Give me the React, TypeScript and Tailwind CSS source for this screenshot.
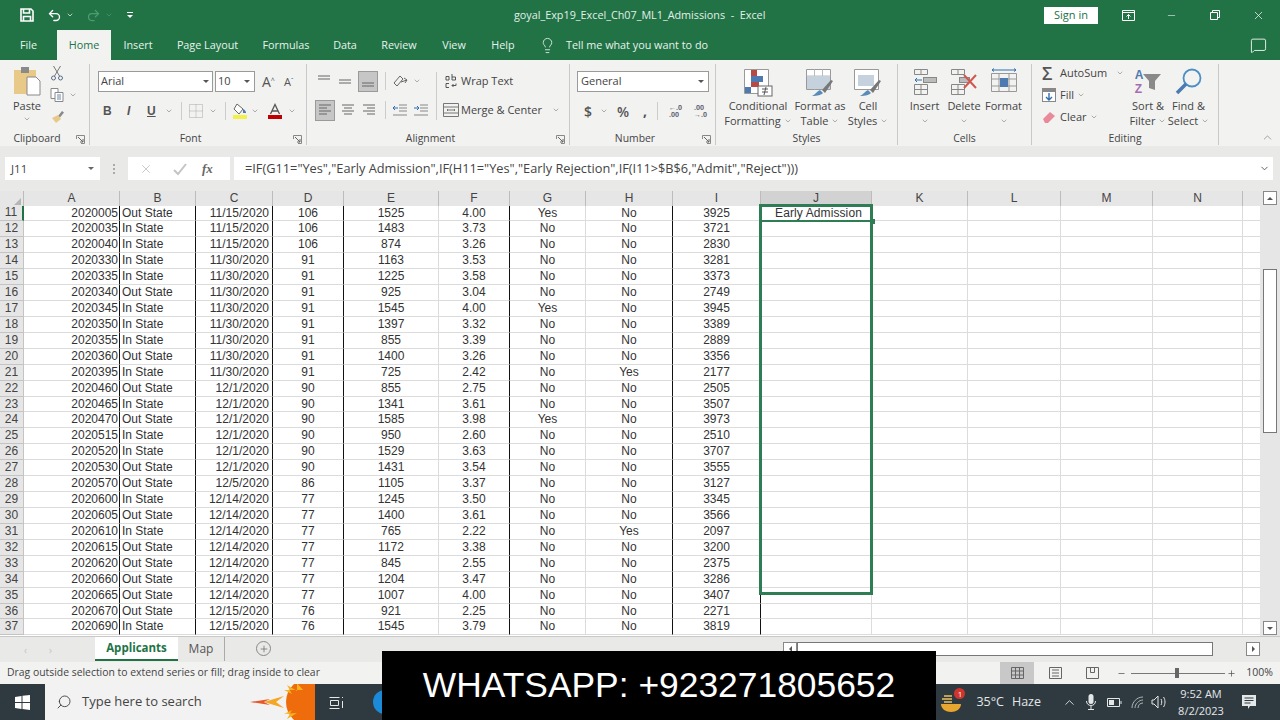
import type { ReactNode } from "react";
import { ChevronDown, ChevronUp, Lightbulb, MessageSquare, Minus, Plus, Search, Undo2, Redo2, X } from "lucide-react";

const UI_FONT = "font-['Open_Sans','Noto_Sans',sans-serif]";
const CELL_FONT = "font-['Liberation_Sans',Arial,sans-serif]";

const COLUMNS = [
  { name: "A", w: 96, align: "text-right pr-[1px]", black: true },
  { name: "B", w: 76, align: "text-left pl-[2px]", black: true },
  { name: "C", w: 77, align: "text-right pr-[3px]", black: true },
  { name: "D", w: 71, align: "text-center", black: true },
  { name: "E", w: 95, align: "text-center", black: false },
  { name: "F", w: 71, align: "text-center", black: true },
  { name: "G", w: 76, align: "text-center", black: false },
  { name: "H", w: 87, align: "text-center", black: true },
  { name: "I", w: 88, align: "text-center", black: true },
  { name: "J", w: 111, align: "text-center pl-[5px] tracking-[0.1px]", black: false },
  { name: "K", w: 96, align: "", black: false },
  { name: "L", w: 93, align: "", black: false },
  { name: "M", w: 92, align: "", black: false },
  { name: "N", w: 90, align: "", black: false },
];

const ROWS: string[][] = [
  ["2020005", "Out State", "11/15/2020", "106", "1525", "4.00", "Yes", "No", "3925", "Early Admission"],
  ["2020035", "In State", "11/15/2020", "106", "1483", "3.73", "No", "No", "3721"],
  ["2020040", "In State", "11/15/2020", "106", "874", "3.26", "No", "No", "2830"],
  ["2020330", "In State", "11/30/2020", "91", "1163", "3.53", "No", "No", "3281"],
  ["2020335", "In State", "11/30/2020", "91", "1225", "3.58", "No", "No", "3373"],
  ["2020340", "Out State", "11/30/2020", "91", "925", "3.04", "No", "No", "2749"],
  ["2020345", "In State", "11/30/2020", "91", "1545", "4.00", "Yes", "No", "3945"],
  ["2020350", "In State", "11/30/2020", "91", "1397", "3.32", "No", "No", "3389"],
  ["2020355", "In State", "11/30/2020", "91", "855", "3.39", "No", "No", "2889"],
  ["2020360", "Out State", "11/30/2020", "91", "1400", "3.26", "No", "No", "3356"],
  ["2020395", "In State", "11/30/2020", "91", "725", "2.42", "No", "Yes", "2177"],
  ["2020460", "Out State", "12/1/2020", "90", "855", "2.75", "No", "No", "2505"],
  ["2020465", "In State", "12/1/2020", "90", "1341", "3.61", "No", "No", "3507"],
  ["2020470", "Out State", "12/1/2020", "90", "1585", "3.98", "Yes", "No", "3973"],
  ["2020515", "In State", "12/1/2020", "90", "950", "2.60", "No", "No", "2510"],
  ["2020520", "In State", "12/1/2020", "90", "1529", "3.63", "No", "No", "3707"],
  ["2020530", "Out State", "12/1/2020", "90", "1431", "3.54", "No", "No", "3555"],
  ["2020570", "Out State", "12/5/2020", "86", "1105", "3.37", "No", "No", "3127"],
  ["2020600", "In State", "12/14/2020", "77", "1245", "3.50", "No", "No", "3345"],
  ["2020605", "Out State", "12/14/2020", "77", "1400", "3.61", "No", "No", "3566"],
  ["2020610", "In State", "12/14/2020", "77", "765", "2.22", "No", "Yes", "2097"],
  ["2020615", "Out State", "12/14/2020", "77", "1172", "3.38", "No", "No", "3200"],
  ["2020620", "Out State", "12/14/2020", "77", "845", "2.55", "No", "No", "2375"],
  ["2020660", "Out State", "12/14/2020", "77", "1204", "3.47", "No", "No", "3286"],
  ["2020665", "Out State", "12/14/2020", "77", "1007", "4.00", "No", "No", "3407"],
  ["2020670", "Out State", "12/15/2020", "76", "921", "2.25", "No", "No", "2271"],
  ["2020690", "In State", "12/15/2020", "76", "1545", "3.79", "No", "No", "3819"],
];

const TABS = [
  { label: "File", w: "w-[57px]" },
  { label: "Home", w: "w-[54px]", active: true },
  { label: "Insert", w: "w-[54px]" },
  { label: "Page Layout", w: "w-[85px]" },
  { label: "Formulas", w: "w-[72px]" },
  { label: "Data", w: "w-[46px]" },
  { label: "Review", w: "w-[62px]" },
  { label: "View", w: "w-[48px]" },
  { label: "Help", w: "w-[50px]" },
];

function Caret({ className = "" }: { className?: string }) {
  return <ChevronDown strokeWidth={1.5} className={`h-[8px] w-[8px] shrink-0 text-[#666] ${className}`} />;
}

function Launcher() {
  return (
    <svg width="9" height="9" viewBox="0 0 9 9" className="shrink-0">
      <path d="M.5 4V.5H8.500V8.500H5" fill="none" stroke="#888" />
      <path d="M2 2l5 5M7 4v3H4" fill="none" stroke="#666" />
    </svg>
  );
}

function Group({ w, label, launcher, children }: { w: string; label: string; launcher?: boolean; children: ReactNode }) {
  return (
    <div className={`${w} relative flex h-[81px] shrink-0 flex-col border-r border-[#c9c9c9]`}>
      <div className="flex h-[67px] shrink-0">{children}</div>
      <div
        className={`flex h-[14px] items-center justify-center text-[10.400px] leading-none text-[#444] ${
          launcher ? "pr-[15px]" : ""
        }`}
      >
        {label}
      </div>
      {launcher && (
        <div className="absolute bottom-[1px] right-[4px]">
          <Launcher />
        </div>
      )}
    </div>
  );
}

function AlignLines({ kind }: { kind: "top" | "mid" | "bot" | "left" | "center" | "right" }) {
  const paths = {
    top: "M2 3h12M2 6h12",
    mid: "M2 7h12M2 10h12",
    bot: "M2 10h12M2 13h12",
    left: "M2 3h12M2 6h8M2 9h12M2 12h8",
    center: "M2 3h12M4 6h8M2 9h12M4 12h8",
    right: "M2 3h12M6 6h8M2 9h12M6 12h8",
  };
  return (
    <svg width="16" height="16" viewBox="0 0 16 16">
      <path d={paths[kind]} stroke="#666" fill="none" />
    </svg>
  );
}

function BigButton({ w, lines, icon, caretOwnLine }: { w: string; lines: string[]; icon: ReactNode; caretOwnLine?: boolean }) {
  return (
    <div className={`${w} flex shrink-0 flex-col items-center pt-[4px] text-[11px] leading-[15px] text-[#444]`}>
      <div className="flex h-[29px] items-start justify-center">{icon}</div>
      <div className="mt-[1px] whitespace-nowrap">{lines[0]}</div>
      {caretOwnLine ? (
        <div className="flex h-[15px] items-center">
          <Caret />
        </div>
      ) : (
        <div className="flex items-center gap-[3px] whitespace-nowrap">
          {lines[1]}
          <Caret />
        </div>
      )}
    </div>
  );
}

function TitleBar() {
  return (
    <div className="flex h-[30px] items-center text-white">
      <div className="flex w-[514px] shrink-0 items-center pl-[20px]">
        <svg width="14" height="14" viewBox="0 0 14 14" fill="none" stroke="#fff" strokeWidth="1.600">
          <path d="M1 1h10l2 2v10H1zM3.500 1v4h6V1M3.500 13V8.500h7V13" />
        </svg>
        <Undo2 className="ml-[13px] h-[15px] w-[15px]" strokeWidth={2.2} />
        <ChevronDown className="ml-[4px] h-[8px] w-[8px]" />
        <Redo2 className="ml-[12px] h-[15px] w-[15px] text-[#4f9a72]" strokeWidth={2} />
        <ChevronDown className="ml-[4px] h-[8px] w-[8px] text-[#4f9a72]" />
        <div className="ml-[14px] flex flex-col items-center gap-[2px]">
          <div className="h-[1px] w-[6px] bg-white" />
          <div className="h-0 w-0 border-x-[3px] border-t-[3px] border-x-transparent border-t-white" />
        </div>
      </div>
      <div className="w-[251px] shrink-0 whitespace-nowrap text-center text-[10.800px] text-[#e3efe8]">
        goyal_Exp19_Excel_Ch07_ML1_Admissions&nbsp; -&nbsp; Excel
      </div>
      <div className="flex flex-1 items-center">
        <div className="ml-[279px] flex h-[17px] w-[54px] items-center justify-center bg-white text-[11px] text-[#217346]">
          Sign in
        </div>
        <svg width="13" height="11" viewBox="0 0 13 11" className="ml-[24px]" fill="none" stroke="#fff">
          <path d="M.5.5h12v10H.5zM.5 2.500h12M6.500 9V4.500M4.500 6.500l2-2 2 2" />
        </svg>
        <Minus className="ml-[31px] h-[11px] w-[11px]" strokeWidth={1.2} />
        <svg width="10" height="10" viewBox="0 0 10 10" className="ml-[33px]" fill="none" stroke="#fff">
          <path d="M.5 2.500h7v7h-7zM2.500 2.500v-2h7v7h-2" />
        </svg>
        <X className="ml-[32px] h-[13px] w-[13px]" strokeWidth={1.3} />
      </div>
    </div>
  );
}

function TabsRow() {
  return (
    <div className="flex h-[30px] items-stretch text-[10.800px]">
      {TABS.map((t) => (
        <div
          key={t.label}
          className={`${t.w} flex shrink-0 items-center justify-center ${
            t.active ? "bg-[#f2f2f1] text-[#217346]" : "text-[#e8f2ec]"
          }`}
        >
          {t.label}
        </div>
      ))}
      <Lightbulb className="ml-[11px] mt-[7px] h-[17px] w-[17px] text-[#e8f2ec]" strokeWidth={1.2} />
      <div className="ml-[10px] flex items-center text-[#e8f2ec]">Tell me what you want to do</div>
      <MessageSquare className="ml-auto mr-[13px] mt-[7px] h-[17px] w-[17px] text-white" strokeWidth={1.2} />
    </div>
  );
}

function Ribbon() {
  return (
    <div className="relative flex h-[86px] items-start bg-[#f2f2f1] pt-[4px] text-[#444]">
      <Group w="w-[90px]" label="Clipboard" launcher>
        <div className="-mr-[5px] flex w-[54px] flex-col items-center pt-[3px] text-[11px]">
          <svg width="28" height="30" viewBox="0 0 28 30">
            <rect x="1" y="3" width="22" height="24" fill="#e8c987" />
            <rect x="8" y="0" width="8" height="6" fill="#8a8a8a" />
            <path d="M14 10h9l4 4v14H14z" fill="#fff" stroke="#888" />
          </svg>
          <div className="mt-[2px] leading-[14px]">Paste</div>
          <Caret className="mt-[2px]" />
        </div>
        <div className="flex flex-col items-start gap-[6px] pt-[1px]">
          <svg width="16" height="16" viewBox="0 0 16 16" fill="none" stroke="#5a6e86">
            <circle cx="4.500" cy="13" r="2" />
            <circle cx="11.500" cy="13" r="2" />
            <path d="M5.500 11L11.500 1M10.500 11L4.500 1" stroke="#777" />
          </svg>
          <div className="flex items-center gap-[4px]">
            <svg width="16" height="16" viewBox="0 0 16 16" fill="#fff" stroke="#888">
              <path d="M2 1.500h7v10H2z" />
              <path d="M6 5.500h8v9H6z" />
              <path d="M8 8h4M8 10h4M8 12h4" stroke="#6a86a8" />
            </svg>
            <Caret />
          </div>
          <svg width="16" height="16" viewBox="0 0 16 16">
            <path d="M9 7l4-5 2 1.500-4 5z" fill="#8a8a8a" />
            <path d="M3 9l6-3 3 4-5 4z" fill="#e8c987" />
          </svg>
        </div>
      </Group>

      <Group w="w-[217px]" label="Font" launcher>
        <div className="flex w-full flex-col pl-[8px] pt-[7px]">
          <div className="flex items-center">
            <div className="flex h-[21px] w-[115px] items-center justify-between border border-[#9a9a9a] bg-white pl-[2px] pr-[3px] text-[11px]">
              Arial
              <div className="h-0 w-0 border-x-[3px] border-t-[3px] border-x-transparent border-t-[#555]" />
            </div>
            <div className="ml-[2px] flex h-[21px] w-[40px] items-center justify-between border border-[#9a9a9a] bg-white pl-[2px] pr-[4px] text-[11px]">
              10
              <div className="h-0 w-0 border-x-[3px] border-t-[3px] border-x-transparent border-t-[#555]" />
            </div>
            <span className="ml-[7px] text-[14px] leading-none text-[#555]">
              A<sup className="text-[7px]">^</sup>
            </span>
            <span className="ml-[9px] text-[11px] leading-none text-[#555]">
              A<sup className="text-[7px]">ˇ</sup>
            </span>
          </div>
          <div className="mt-[8px] flex h-[22px] items-center">
            <span className={`${CELL_FONT} ml-[5px] w-[24px] text-[12px] font-bold text-[#555]`}>B</span>
            <span className={`${CELL_FONT} w-[20px] text-[12px] font-bold italic text-[#555]`}>I</span>
            <span className={`${CELL_FONT} w-[14px] text-[12px] font-bold text-[#555] underline`}>U</span>
            <Caret className="ml-[4px]" />
            <div className="ml-[8px] mr-[7px] h-[18px] w-px bg-[#ccc]" />
            <svg width="14" height="14" viewBox="0 0 14 14" fill="none" stroke="#aaa" strokeDasharray="1 1">
              <path d="M.5.5h13v13H.5zM7 .5v13M.5 7h13" />
            </svg>
            <Caret className="ml-[6px]" />
            <div className="ml-[8px] mr-[6px] h-[18px] w-px bg-[#ccc]" />
            <svg width="17" height="18" viewBox="0 0 17 18">
              <path d="M5 2l6 5-4 5-5-5z" fill="#fff" stroke="#666" />
              <path d="M11 7c2 1 3 2 3 4H11z" fill="#4d7ab0" />
              <rect x="1" y="13" width="14" height="4" fill="#f4f04a" />
            </svg>
            <Caret className="ml-[2px]" />
            <svg width="16" height="16" viewBox="0 0 16 16" className="ml-[8px]">
              <path d="M3.500 11L8 1.500 12.500 11M5 8h6" fill="none" stroke="#555" strokeWidth="1.300" />
              <rect x="1" y="12" width="14" height="4" fill="#c00000" />
            </svg>
            <Caret className="ml-[5px]" />
          </div>
        </div>
      </Group>

      <Group w="w-[263px]" label="Alignment" launcher>
        <div className="flex w-full pl-[8px] pt-[6px]">
          <div className="flex flex-col">
            <div className="flex h-[22px] items-center gap-[5px] pl-[1px]">
              <AlignLines kind="top" />
              <AlignLines kind="mid" />
              <div className="flex h-[21px] w-[20px] items-center justify-center border border-[#9a9a9a] bg-[#c6c6c6]">
                <AlignLines kind="bot" />
              </div>
              <div className="ml-[2px] h-[18px] w-px bg-[#ccc]" />
              <svg width="18" height="16" viewBox="0 0 18 16" className="ml-[1px]" fill="none" stroke="#666">
                <path d="M2 10l6-7 3 3-6 7zM9 9l6-2M12 5l3 2-2 3" />
              </svg>
              <Caret className="-ml-[2px]" />
            </div>
            <div className="mt-[7px] flex h-[22px] items-center gap-[5px]">
              <div className="flex h-[21px] w-[20px] items-center justify-center border border-[#9a9a9a] bg-[#c6c6c6]">
                <AlignLines kind="left" />
              </div>
              <AlignLines kind="center" />
              <AlignLines kind="right" />
              <div className="ml-[3px] h-[18px] w-px bg-[#ccc]" />
              <svg width="16" height="14" viewBox="0 0 16 14" className="ml-[1px]" fill="none" stroke="#888">
                <path d="M7 2h8M7 5h8M7 8h8M1 12h14" />
                <path d="M6 5H1M3 3L1 5l2 2" stroke="#2f6fb0" />
              </svg>
              <svg width="16" height="14" viewBox="0 0 16 14" fill="none" stroke="#888">
                <path d="M7 2h8M7 5h8M7 8h8M1 12h14" />
                <path d="M1 5h5M4 3l2 2-2 2" stroke="#2f6fb0" />
              </svg>
            </div>
          </div>
          <div className="ml-[7px] mr-[6px] mt-[2px] h-[48px] w-px bg-[#ccc]" />
          <div className="flex flex-col text-[11px]">
            <div className="flex h-[22px] items-center gap-[3px] pl-[1px]">
              <svg width="14" height="16" viewBox="0 0 14 16" fill="none" stroke="#555">
                <path d="M2 7V3.500h3V7H2zM8 1v6h3.500V4H8M5 10.500H2v4h3M8 12.500h4v-2M9.500 11l-1.500 1.500L9.500 14" />
              </svg>
              <span>Wrap Text</span>
            </div>
            <div className="mt-[7px] flex h-[22px] items-center gap-[2px]">
              <svg width="16" height="14" viewBox="0 0 16 14" fill="none" stroke="#777">
                <path d="M.5.5h15v13H.5zM.5 4h15M.5 10h15M5 7h6M5 6L4 7l1 1M11 6l1 1-1 1" />
              </svg>
              <span className="whitespace-nowrap">Merge &amp; Center</span>
              <Caret className="ml-[8px]" />
            </div>
          </div>
        </div>
      </Group>

      <Group w="w-[146px]" label="Number" launcher>
        <div className="flex w-full flex-col pl-[7px] pt-[7px]">
          <div className="flex h-[21px] w-[132px] items-center justify-between border border-[#9a9a9a] bg-white pl-[3px] pr-[4px] text-[11px]">
            General
            <div className="h-0 w-0 border-x-[3px] border-t-[3px] border-x-transparent border-t-[#555]" />
          </div>
          <div className="mt-[8px] flex h-[22px] items-center text-[#555]">
            <span className="ml-[7px] w-[13px] text-[14px] font-semibold">$</span>
            <Caret className="ml-[3px]" />
            <span className="ml-[9px] w-[16px] text-[14px] font-semibold">%</span>
            <span className="ml-[10px] w-[8px] text-[14px] font-bold leading-none">,</span>
            <div className="ml-[6px] mr-[11px] h-[18px] w-px bg-[#ccc]" />
            <span className="w-[16px] text-[7px] font-bold leading-[7px] text-[#667]">
              ←.0
              <br />
              .00
            </span>
            <span className="ml-[9px] w-[16px] text-[7px] font-bold leading-[7px] text-[#667]">
              .00
              <br />
              →.0
            </span>
          </div>
        </div>
      </Group>

      <Group w="w-[182px]" label="Styles">
        <BigButton
          w="w-[84px]"
          lines={["Conditional", "Formatting"]}
          icon={
            <svg width="30" height="29" viewBox="0 0 30 29">
              <path d="M1.500 1.500h24v24h-24z" fill="#fff" stroke="#999" />
              <rect x="8" y="2" width="6" height="6" fill="#b64a45" />
              <rect x="8" y="8" width="12" height="6" fill="#4d7ab0" />
              <rect x="8" y="14" width="8" height="5" fill="#b64a45" />
              <rect x="2" y="19" width="6" height="6" fill="#4d7ab0" />
              <rect x="15" y="18" width="14" height="10" fill="#fff" stroke="#666" />
              <path d="M19 21h6M19 24h6M23 19l-2 8" stroke="#555" fill="none" />
            </svg>
          }
        />
        <BigButton
          w="w-[40px]"
          lines={["Format as", "Table"]}
          icon={
            <svg width="30" height="29" viewBox="0 0 30 29">
              <path d="M1.500 1.500h24v20h-24z" fill="#fff" stroke="#999" />
              <path d="M9.500 1.500v20M17.500 1.500v20M1.500 8h24" stroke="#bbb" fill="none" />
              <rect x="2" y="8" width="23" height="13" fill="#c5d2de" />
              <path d="M7 28c3-1 5-5 8-6l3 3c-2 2-5 3-11 3z" fill="#5a8bb8" />
              <path d="M17 22l9-10 2 1-8 12z" fill="#777" />
            </svg>
          }
        />
        <BigButton
          w="w-[56px]"
          lines={["Cell", "Styles"]}
          icon={
            <svg width="30" height="29" viewBox="0 0 30 29">
              <path d="M1.500 1.500h24v20h-24z" fill="#fff" stroke="#999" />
              <rect x="5" y="7" width="16" height="11" fill="#c5d2de" />
              <path d="M7 28c3-1 5-5 8-6l3 3c-2 2-5 3-11 3z" fill="#5a8bb8" />
              <path d="M17 22l9-10 2 1-8 12z" fill="#777" />
            </svg>
          }
        />
      </Group>

      <Group w="w-[134px]" label="Cells">
        <div className="flex w-full pl-[7px]">
          <BigButton
            w="w-[39px]"
            caretOwnLine
            lines={["Insert"]}
            icon={
              <svg width="26" height="28" viewBox="0 0 26 28" fill="none" stroke="#888">
                <path d="M2.500 1.500h13v5h-13zM9 1.500v5M2.500 16.500h13v10h-13zM9 16.500v10M2.500 21.500h13" />
                <rect x="11.500" y="9.500" width="13" height="5" fill="#bbb" />
                <path d="M10 12H3M5 10l-2 2 2 2" stroke="#2f6fb0" />
              </svg>
            }
          />
          <BigButton
            w="w-[40px]"
            caretOwnLine
            lines={["Delete"]}
            icon={
              <svg width="28" height="28" viewBox="0 0 28 28" fill="none" stroke="#888">
                <path d="M1.500 1.500h13v5h-13zM8 1.500v5M1.500 16.500h13v10h-13zM8 16.500v10M1.500 21.500h13" />
                <rect x="9.500" y="9.500" width="10" height="5" fill="#bbb" />
                <path d="M14 7l12 13M26 7L14 20" stroke="#d0584f" strokeWidth="2" />
              </svg>
            }
          />
          <BigButton
            w="w-[39px]"
            caretOwnLine
            lines={["Format"]}
            icon={
              <svg width="28" height="29" viewBox="0 0 28 29" fill="none" stroke="#999">
                <path d="M1.500 5.500h25v18h-25zM9 5.500v18M19 5.500v18M1.500 11h25M1.500 18h25" />
                <rect x="10" y="10" width="8" height="9" fill="#4d7ab0" stroke="none" />
                <path d="M2 2h24M4 .5l-2 1.500 2 1.500M24 .5l2 1.500-2 1.500" stroke="#2f6fb0" />
              </svg>
            }
          />
        </div>
      </Group>

      <Group w="w-[187px]" label="Editing">
        <div className="flex w-full pl-[10px]">
          <div className="-mt-[2px] flex w-[86px] flex-col text-[11px] leading-[22px]">
            <div className="flex h-[22px] items-center">
              <span className="w-[18px] text-[18px] font-semibold leading-none text-[#555]">Σ</span>
              <span>AutoSum</span>
              <Caret className="ml-[9px]" />
            </div>
            <div className="flex h-[22px] items-center">
              <svg width="14" height="14" viewBox="0 0 14 14" className="mr-[4px]">
                <rect x=".5" y=".5" width="13" height="13" fill="#fff" stroke="#888" />
                <rect x="1" y="1" width="12" height="3" fill="#888" />
                <path d="M7 5v7M4 9l3 3 3-3" stroke="#2f6fb0" fill="none" strokeWidth="1.400" />
              </svg>
              <span>Fill</span>
              <Caret className="ml-[3px]" />
            </div>
            <div className="flex h-[22px] items-center">
              <svg width="14" height="14" viewBox="0 0 14 14" className="mr-[4px]">
                <path d="M1 9l7-7 5 4-7 7H3z" fill="#e88a9a" />
              </svg>
              <span>Clear</span>
              <Caret className="ml-[3px]" />
            </div>
          </div>
          <BigButton
            w="w-[40px]"
            lines={["Sort &", "Filter"]}
            icon={
              <span className="flex">
                <span className={`${CELL_FONT} flex flex-col text-[12px] font-bold leading-[14px]`}>
                  <span className="text-[#4d7ab0]">A</span>
                  <span className="text-[#a56cb0]">Z</span>
                </span>
                <svg width="18" height="18" viewBox="0 0 18 18" className="mt-[5px]">
                  <path d="M0 1h18l-6 7v9l-6-2V8z" fill="#8a8a8a" />
                </svg>
              </span>
            }
          />
          <BigButton
            w="w-[41px]"
            lines={["Find &", "Select"]}
            icon={
              <svg width="28" height="28" viewBox="0 0 28 28" fill="none">
                <circle cx="17" cy="10" r="8.500" stroke="#4d8fc4" strokeWidth="1.800" />
                <path d="M11 16L2 25" stroke="#4d7ab0" strokeWidth="3.500" />
              </svg>
            }
          />
        </div>
      </Group>

      <ChevronUp className="absolute bottom-[2px] right-[6px] h-[13px] w-[13px] text-[#777]" strokeWidth={1.2} />
    </div>
  );
}

function FormulaBar() {
  return (
    <div className="flex h-[45px] items-start bg-[#e9e9e8] pt-[11px]">
      <div className="ml-[5px] flex h-[23px] w-[95px] items-center justify-between bg-white pl-[6px] pr-[6px] text-[11.500px] text-[#444]">
        J11
        <div className="h-0 w-0 border-x-[3.500px] border-t-[3.500px] border-x-transparent border-t-[#666]" />
      </div>
      <div className="ml-[13px] mt-[7px] flex flex-col gap-[2px]">
        <div className="h-[2px] w-[2px] bg-[#aaa]" />
        <div className="h-[2px] w-[2px] bg-[#aaa]" />
        <div className="h-[2px] w-[2px] bg-[#aaa]" />
      </div>
      <div className="ml-[13px] flex h-[23px] w-[102px] items-center bg-white pl-[11px] text-[#c4c4c4]">
        <X className="h-[14px] w-[14px]" strokeWidth={1.5} />
        <svg width="14" height="14" viewBox="0 0 14 14" className="ml-[20px]" fill="none" stroke="#c4c4c4" strokeWidth="2">
          <path d="M1 8l4 4 8-10" />
        </svg>
        <span className="ml-[15px] font-['Liberation_Serif',serif] text-[13px] font-bold italic text-[#666]">fx</span>
      </div>
      <div className="ml-[4px] flex h-[23px] w-[1039px] items-center justify-between bg-white pl-[11px] pr-[3px] text-[12.770px] text-[#444]">
        <span>=IF(G11="Yes","Early Admission",IF(H11="Yes","Early Rejection",IF(I11&gt;$B$6,"Admit","Reject")))</span>
        <ChevronDown className="h-[11px] w-[11px] text-[#555]" strokeWidth={2} />
      </div>
    </div>
  );
}

function Sheet() {
  return (
    <div className={`${CELL_FONT} relative flex h-[445px] bg-white text-[12px] text-[#333]`}>
      <div className="flex w-[1260px] shrink-0 flex-col overflow-hidden">
        <div className="flex h-[14.500px] shrink-0 bg-[#e6e6e6] text-[#444]">
          <div className="flex w-[24px] shrink-0 items-end justify-end border-r border-[#bbb] pb-[1px] pr-[2px]">
            <div className="h-0 w-0 border-b-[7px] border-l-[7px] border-b-[#b5b5b5] border-l-transparent" />
          </div>
          {COLUMNS.map((c) => (
            <div
              key={c.name}
              style={{ width: c.w }}
              className={`flex shrink-0 items-center justify-center border-r border-[#bcbcbc] leading-none ${
                c.name === "J" ? "bg-[#d2d2d2]" : ""
              }`}
            >
              {c.name}
            </div>
          ))}
        </div>
        {ROWS.map((row, i) => (
          <div key={i} className="flex h-[15.930px] shrink-0 leading-[15px]">
            <div
              className={`flex w-[24px] shrink-0 items-center justify-center border-b border-r border-[#c4c4c4] bg-[#e6e6e6] text-[#444] ${
                i === 0 ? "border-r-2 border-r-[#217346] bg-[#d2d2d2]" : ""
              }`}
            >
              {i + 11}
            </div>
            {COLUMNS.map((c, j) => (
              <div
                key={c.name}
                style={{ width: c.w }}
                className={`shrink-0 overflow-visible whitespace-nowrap border-b border-r border-b-[#dcdcdc] ${
                  c.black ? "border-r-[#111]" : "border-r-[#dcdcdc]"
                } ${c.align}`}
              >
                {row[j] ?? ""}
              </div>
            ))}
            <div className="flex-1 border-b border-[#dcdcdc]" />
          </div>
        ))}
      </div>
      {/* fill selection over column J */}
      <div className="absolute left-[759px] top-[13px] h-[391px] w-[114px] border-[3px] border-[#2f7d55]">
        <div className="mt-[13px] h-[2px] w-full bg-[#2f7d55]" />
        <div className="absolute right-[-5px] top-[12px] h-[5px] w-[5px] bg-[#2f7d55]" />
      </div>
      <div className="flex flex-1 flex-col items-center bg-[#e6e6e6]">
        <div className="flex h-[14px] w-[14px] items-center justify-center border border-[#888] bg-white">
          <div className="h-0 w-0 border-x-[3px] border-b-[3px] border-x-transparent border-b-[#555]" />
        </div>
        <div className="mt-[64px] h-[164px] w-[14px] border border-[#777] bg-white" />
        <div className="mt-auto mb-[1px] flex h-[14px] w-[14px] items-center justify-center border border-[#888] bg-white">
          <div className="h-0 w-0 border-x-[3px] border-t-[3px] border-x-transparent border-t-[#555]" />
        </div>
      </div>
    </div>
  );
}

function SheetTabs() {
  return (
    <div className="flex h-[26px] items-start border-t border-[#c8c8c8] bg-[#e9e9e8] text-[12px]">
      <div className="ml-[24px] mt-[6px] flex w-[71px] gap-[22px] text-[#c5c5c5]">
        <span className="text-[10px]">‹</span>
        <span className="text-[10px]">›</span>
      </div>
      <div className="flex h-[24px] w-[83px] items-center justify-center border-b-2 border-[#217346] bg-white text-[11.500px] font-bold text-[#217346]">
        Applicants
      </div>
      <div className="flex h-[24px] w-[47px] items-center justify-center border-r border-[#aaa] text-[#555]">Map</div>
      <div className="ml-[31px] mt-[4px] flex h-[15px] w-[15px] items-center justify-center rounded-full border border-[#888]">
        <Plus className="h-[10px] w-[10px] text-[#777]" strokeWidth={2} />
      </div>
      <div className="ml-[512px] mt-[5px] flex h-[14px] w-[477px] items-stretch">
        <div className="flex w-[14px] items-center justify-center border border-[#888] bg-white">
          <div className="h-0 w-0 border-y-[3px] border-r-[3px] border-y-transparent border-r-[#555]" />
        </div>
        <div className="w-[416px] border border-[#777] bg-white" />
        <div className="flex-1" />
        <div className="flex w-[14px] items-center justify-center border border-[#888] bg-white">
          <div className="h-0 w-0 border-y-[3px] border-l-[3px] border-y-transparent border-l-[#555]" />
        </div>
      </div>
    </div>
  );
}

function StatusBar() {
  return (
    <div className="flex h-[22px] items-center bg-[#f2f2f1] text-[10.400px] text-[#444]">
      <span className="ml-[7px]">Drag outside selection to extend series or fill; drag inside to clear</span>
      <div className="ml-auto flex h-full items-center pr-[7px]">
        <div className="flex h-full w-[34px] items-center justify-center bg-[#c8c8c8]">
          <svg width="13" height="12" viewBox="0 0 13 12" fill="none" stroke="#666">
            <path d="M.5.5h12v11H.5zM4.500.5v11M8.500.5v11M.5 4h12M.5 8h12" />
          </svg>
        </div>
        <svg width="13" height="12" viewBox="0 0 13 12" className="ml-[15px]" fill="none" stroke="#666">
          <path d="M.5.5h12v11H.5zM3 3h7M3 6h7M3 9h7" />
        </svg>
        <svg width="13" height="12" viewBox="0 0 13 12" className="ml-[24px]" fill="none" stroke="#666">
          <path d="M.5.5h12v11H.5zM4.500.5v5h4v-5" />
        </svg>
        <Minus className="ml-[18px] h-[9px] w-[9px] text-[#555]" />
        <div className="relative ml-[5px] flex h-[9px] w-[94px] items-center">
          <div className="h-px w-full bg-[#777]" />
          <div className="absolute left-[44px] h-[10px] w-[4px] bg-[#666]" />
        </div>
        <Plus className="ml-[2px] h-[9px] w-[9px] text-[#555]" />
        <span className="ml-[10px] text-[10.500px]">100%</span>
      </div>
    </div>
  );
}

function Taskbar() {
  return (
    <div className="flex h-[36px] items-center bg-[#2f3a40] text-[#e4e7e8]">
      <div className="flex h-full w-[45px] shrink-0 items-center justify-center">
        <svg width="15" height="15" viewBox="0 0 15 15" fill="#fff">
          <path d="M0 2l6.500-1v6H0zM7.500.8L15 0v7H7.500zM0 8h6.500v6L0 13zM7.500 8H15v7l-7.500-1z" />
        </svg>
      </div>
      <div className="flex h-full w-[270px] shrink-0 items-center bg-[#f2f2f2] text-[13px] text-[#444]">
        <Search className="ml-[11px] h-[16px] w-[16px] -scale-x-100" strokeWidth={1.4} />
        <span className="ml-[10px] whitespace-nowrap">Type here to search</span>
        <svg width="65" height="36" viewBox="0 0 65 36" className="ml-auto">
          <path d="M0 18l20-3-6 3 6 3z" fill="#e8572a" />
          <path d="M14 18l20-6-8 6 8 6z" fill="#f5a623" />
          <circle cx="60" cy="18" r="24" fill="#ef6c0c" />
          <path d="M34 6l8 4-5-9 10 6 0-8 6 7M34 30l8-4-5 9 10-6" fill="#f5b323" />
        </svg>
      </div>
      <svg width="16" height="15" viewBox="0 0 16 15" className="ml-[14px]" fill="none" stroke="#e4e7e8">
        <path d="M.5 2.500h10M.5 13.500h10M1.500 5.500h8v5h-8zM13.500 2v1M13.500 6v7" />
      </svg>
      <div className="ml-[28px] h-[24px] w-[24px] rounded-full bg-[#1b8ad8]" />
      <div className="ml-auto flex items-center pr-[5px]">
        <div className="relative">
          <svg width="24" height="22" viewBox="0 0 24 22">
            <path d="M2 13h20c0 5-5 8-10 8S2 18 2 13z" fill="#e8a530" />
            <path d="M5 5h8M3 8h10M5 11h8" stroke="#f0c060" strokeWidth="1.500" />
          </svg>
          <span className="absolute -right-[2px] -top-[3px] flex h-[11px] w-[11px] items-center justify-center rounded-full bg-[#d0342c] text-[8px] leading-none text-white">
            1
          </span>
        </div>
        <span className="ml-[13px] text-[12.500px]">35°C</span>
        <span className="ml-[8px] text-[12.500px]">Haze</span>
        <ChevronUp className="ml-[21px] h-[15px] w-[15px]" strokeWidth={1.4} />
        <svg width="10" height="16" viewBox="0 0 10 16" className="ml-[9px]">
          <rect x="2.500" y="0" width="5" height="10" rx="2.500" fill="#e4e7e8" />
          <path d="M.5 7c0 6 9 6 9 0M5 12v3M2 15.500h6" stroke="#e4e7e8" fill="none" />
        </svg>
        <svg width="15" height="9" viewBox="0 0 15 9" className="ml-[11px]" fill="none" stroke="#e4e7e8">
          <path d="M.5.5h12v8H.5zM14 3v3" />
          <rect x="2" y="2" width="5" height="5" fill="#e4e7e8" stroke="none" />
        </svg>
        <svg width="13" height="13" viewBox="0 0 13 13" className="ml-[9px]" fill="none" stroke="#aeb4b6">
          <path d="M1 12C1 6 6 1 12 1M4 12c0-4 4-8 8-8M7 12c0-3 2-5 5-5" />
        </svg>
        <svg width="16" height="14" viewBox="0 0 16 14" className="ml-[7px]" fill="none" stroke="#e4e7e8">
          <path d="M1 5h2l4-4v12L3 9H1zM10 4c1 2 1 4 0 6M12.500 2c2 3 2 7 0 10" />
        </svg>
        <div className="ml-[9px] flex w-[50px] flex-col items-center whitespace-nowrap text-[11px] leading-[17px]">
          <span>9:52 AM</span>
          <span>8/2/2023</span>
        </div>
        <svg width="16" height="16" viewBox="0 0 16 16" className="ml-[15px] mr-[18px]" fill="#e4e7e8">
          <path d="M1 1h14v11H9l-2 3v-3H1z" />
          <path d="M3.500 4h9M3.500 6.500h9M3.500 9h6" stroke="#2f3a40" />
        </svg>
      </div>
    </div>
  );
}

export default function App() {
  return (
    <div className={`${UI_FONT} relative h-[720px] w-[1280px] overflow-hidden bg-[#217346]`}>
      <TitleBar />
      <TabsRow />
      <Ribbon />
      <FormulaBar />
      <Sheet />
      <SheetTabs />
      <StatusBar />
      <Taskbar />
      {/* video watermark sits over the status bar and taskbar */}
      <div className={`${CELL_FONT} absolute bottom-0 left-[382px] flex h-[69px] w-[554px] items-center justify-center bg-black text-[35.400px] text-white`}>
        WHATSAPP: +923271805652
      </div>
    </div>
  );
}
